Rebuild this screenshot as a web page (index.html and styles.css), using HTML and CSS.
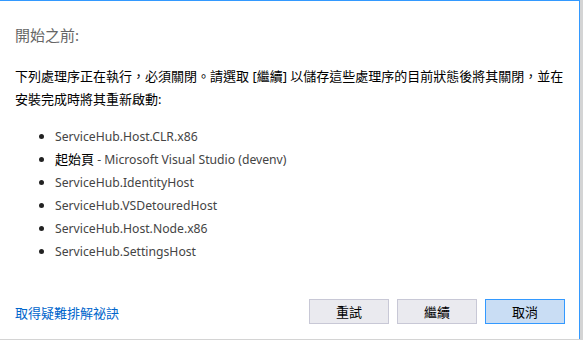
FILE: index.html
```html
<html>

<head>
    <meta charset="utf-8" />
    <link rel="stylesheet" href="styles.css">
</head>

<body>
    <div class="dialog">
        <h1 class="title">開始之前:</h1>

        <p class="message">下列處理序正在執行，必須關閉。請選取 [繼續] 以儲存這些處理序的目前狀態後將其關閉，並在安裝完成時將其重新啟動:</p>

        <ul class="procs">
            <li>ServiceHub.Host.CLR.x86</li>
            <li><span class="cjk">起始頁</span> - Microsoft Visual Studio (devenv)</li>
            <li>ServiceHub.IdentityHost</li>
            <li>ServiceHub.VSDetouredHost</li>
            <li>ServiceHub.Host.Node.x86</li>
            <li>ServiceHub.SettingsHost</li>
        </ul>

        <div class="footer">
            <a class="help" href="#">取得疑難排解祕訣</a>
            <div class="buttons">
                <button class="btn">重試</button>
                <button class="btn">繼續</button>
                <button class="btn primary">取消</button>
            </div>
        </div>
    </div>
</body>
</html>
```

FILE: styles.css
```css
body {
    margin: 0;
    background-color: #d4d4d4;
    font-family: "Noto Sans", "Noto Sans CJK TC", sans-serif;
    font-size: 13px;
    color: #000000;
}

.dialog {
    width: 580px;
    height: 339px;
    background-color: #ffffff;
    border-top: 1px solid #3399ff;
    border-right: 1px solid #3399ff;
    display: flex;
    flex-direction: column;
    padding: 24px 0 0 15px;
    box-sizing: border-box;
}

.title {
    margin: 0;
    font-size: 15px;
    line-height: 20px;
    font-weight: normal;
    color: #666666;
}

.message {
    margin: 20px 0 0 0;
    width: 552px;
    line-height: 23px;
}

.procs {
    list-style: none;
    margin: 14px 0 0 0;
    padding: 0 0 0 40px;
    color: #444444;
    font-size: 12.2px;
}

.procs li {
    line-height: 23px;
    position: relative;
}

.procs li::before {
    content: "";
    position: absolute;
    left: -16px;
    top: 9px;
    width: 5px;
    height: 5px;
    border-radius: 50%;
    background-color: #222222;
}

.procs .cjk {
    color: #000000;
    font-size: 13px;
}

.footer {
    margin-top: 36px;
    display: flex;
    align-items: center;
    justify-content: space-between;
    padding-right: 14px;
}

.help {
    color: #0066cc;
    text-decoration: none;
    margin-top: 2px;
}

.buttons {
    display: flex;
    gap: 8px;
}

.btn {
    width: 80px;
    height: 25px;
    font-family: inherit;
    font-size: 13px;
    color: #000000;
    background-color: #eaeaef;
    border: 1px solid #c8c8d6;
    padding: 0;
}

.btn.primary {
    background-color: #c9ddf4;
    border-color: #3399ff;
}
```
